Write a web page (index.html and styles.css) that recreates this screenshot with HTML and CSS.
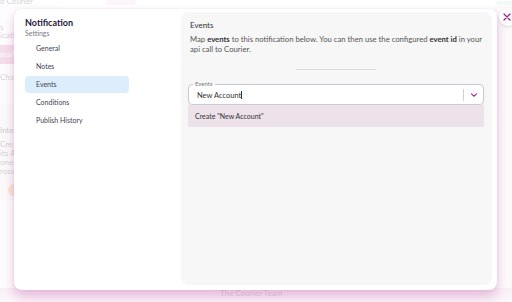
FILE: index.html
```html
<!DOCTYPE html>
<html>
<head>
<meta charset="utf-8">
<link rel="stylesheet" href="styles.css">
</head>
<body>
<div class="backdrop">
  <div class="topbar">
    <span class="brand">o Courier</span>
    <span class="pill-pink"></span>
    <span class="pill-green"></span>
  </div>
  <div class="bd-main">
    <div class="bd-left">
      <div class="bd-s">s</div>
      <div class="bd-s">ication</div>
      <div class="bd-btn">mail</div>
      <div class="bd-cha">Cha</div>
      <div class="bd-box">
        <div class="bd-h">Integrate</div>
        <div>Create a</div>
        <div>its API</div>
        <div>one or</div>
        <div>ross all</div>
        <div class="bd-dot"></div>
      </div>
    </div>
    <div class="bd-center"></div>
    <div class="bd-right"></div>
  </div>
  <div class="bd-foot"><span>The Courier Team</span></div>
</div>
<div class="veil"></div>

<div class="modal">
  <nav class="side">
    <div class="side-title">Notification</div>
    <div class="side-sub">Settings</div>
    <ul class="menu">
      <li>General</li>
      <li>Notes</li>
      <li class="active">Events</li>
      <li>Conditions</li>
      <li>Publish History</li>
    </ul>
  </nav>
  <section class="panel">
    <h2 class="panel-title">Events</h2>
    <p class="desc">Map <b>events</b> to this notification below. You can then use the configured <b>event id</b> in your api call to Courier.</p>
    <div class="divider"></div>
    <div class="field">
      <span class="field-label">Events</span>
      <span class="field-value">New Account<span class="caret"></span></span>
      <span class="field-sep"></span>
      <svg class="chev" width="8" height="6" viewBox="0 0 8 6"><path d="M1.5 1.8 L4 4.2 L6.5 1.8" fill="none" stroke="#9c2a8e" stroke-width="1.1" stroke-linecap="round"/></svg>
    </div>
    <div class="option">Create "New Account"</div>
  </section>
</div>

<button class="close" aria-label="close">
  <svg width="10" height="10" viewBox="0 0 10 10"><path d="M2 2 L8 8 M8 2 L2 8" stroke="#a0208e" stroke-width="1.3" stroke-linecap="round"/></svg>
</button>
</body>
</html>
```

FILE: styles.css
```css
* { box-sizing: border-box; }
html, body {
  margin: 0;
  padding: 0;
  width: 512px;
  height: 302px;
  overflow: hidden;
  background: #ffffff;
  font-family: "Lato", "Open Sans", sans-serif;
  position: relative;
}

/* ---------- backdrop (app behind the modal) ---------- */
.backdrop {
  width: 512px;
  height: 302px;
  display: flex;
  flex-direction: column;
  color: #777;
}
.topbar {
  height: 5px;
  display: flex;
  align-items: flex-end;
  font-size: 8px;
  overflow: hidden;
}
.brand { line-height: 8px; margin-top: -4px; color: #555; white-space: nowrap; }
.pill-pink {
  width: 30px; height: 5px;
  margin-left: 73px;
  background: #f2dcec;
  border-radius: 0 0 3px 3px;
}
.pill-green {
  width: 16px; height: 4px;
  margin-left: auto;
  background: #cdeee0;
  border-radius: 0 0 0 3px;
}
.bd-main {
  flex: 1;
  display: flex;
}
.bd-left {
  width: 60px;
  font-size: 8px;
  padding-top: 18px;
  background: #fbf7fa;
}
.bd-s { line-height: 8px; color: #667; }
.bd-btn {
  margin-top: 6px;
  height: 19px;
  width: 40px;
  background: #d68ab9;
  color: #fff;
  line-height: 19px;
  border-radius: 0 3px 3px 0;
}
.bd-cha { margin-top: 8px; color: #667; }
.bd-box {
  margin-top: 22px;
  height: 96px;
  background: #f0eef0;
  padding-top: 22px;
  line-height: 9px;
  color: #555;
}
.bd-h { margin-bottom: 5px; color: #444; }
.bd-dot {
  width: 12px; height: 12px; border-radius: 50%;
  background: #f0a060;
  margin: 8px 0 0 8px;
}
.bd-center { flex: 1; }
.bd-right {
  width: 18px;
  background: #f8ecf4;
}
.bd-foot {
  height: 14px;
  background: linear-gradient(#ecc6e2, #f6e4f0);
  font-size: 8px;
  font-weight: 700;
  color: #8a7088;
  padding-left: 220px;
  line-height: 11px;
}
.veil {
  position: absolute;
  inset: 0;
  background: rgba(255, 255, 255, 0.72);
}

/* ---------- modal ---------- */
.modal {
  position: absolute;
  left: 14px;
  top: 9px;
  width: 483px;
  height: 281px;
  background: #ffffff;
  border-radius: 8px;
  box-shadow: 0 7px 12px rgba(190, 90, 170, 0.35), 0 0 3px rgba(200, 120, 180, 0.2);
  display: flex;
  padding: 3px 5px 5px 11px;
}
.side {
  flex: none;
  width: 156px;
  padding-top: 5px;
}
.side-title {
  font-size: 9px;
  font-weight: 700;
  color: #1e1b3a;
  line-height: 12px;
}
.side-sub {
  font-size: 7px;
  color: #7a7a85;
  line-height: 9px;
}
.menu {
  list-style: none;
  margin: 2px 0 0 0;
  padding: 0;
  width: 104px;
}
.menu li {
  height: 17px;
  line-height: 17px;
  margin-bottom: 1px;
  padding-left: 11px;
  font-size: 7px;
  color: #3f3f55;
  border-radius: 4px;
}
.menu li.active { background: #dcedfb; }

.panel {
  flex: 1;
  min-width: 0;
  background: #f7f7f7;
  border-radius: 8px;
  padding: 8px 8px 0 7px;
}
.panel-title {
  margin: 0 0 0 2px;
  font-size: 8px;
  font-weight: 400;
  color: #333;
  line-height: 10px;
}
.desc {
  margin: 4px 0 0 2px;
  font-size: 7.7px;
  line-height: 10px;
  color: #555;
  max-width: 292px;
}
.desc b { color: #333; font-weight: 700; }
.divider {
  width: 80px;
  height: 1px;
  background: #dddddd;
  margin: 15px auto 0;
}
.field {
  margin-top: 14px;
  height: 21px;
  border: 1px solid #c8c8d4;
  border-radius: 4px;
  background: #fff;
  position: relative;
  display: flex;
  align-items: center;
  padding-left: 8px;
}
.field-label {
  position: absolute;
  left: 4px;
  top: -5px;
  font-size: 6px;
  line-height: 8px;
  padding: 0 2px;
  color: #777;
  background: linear-gradient(#f7f7f7 50%, #fff 50%);
}
.field-value {
  flex: 1;
  font-size: 7.5px;
  color: #333;
  margin-top: 1px;
}
.caret {
  display: inline-block;
  width: 1px;
  height: 8px;
  background: #333;
  vertical-align: -1px;
}
.field-sep {
  width: 1px;
  height: 12px;
  background: #d0d0d8;
}
.chev { margin: 1px 5px 0 6px; }
.option {
  height: 22px;
  background: #ede2ea;
  font-size: 7px;
  color: #333;
  line-height: 22px;
  padding-left: 7px;
}

.close {
  position: absolute;
  left: 499px;
  top: 8px;
  width: 18px;
  height: 18px;
  border-radius: 50%;
  border: none;
  background: #fff;
  box-shadow: 0 1px 3px rgba(0,0,0,0.15);
  padding: 0 0 0 3px;
  display: flex;
  align-items: center;
  justify-content: flex-start;
}
```
